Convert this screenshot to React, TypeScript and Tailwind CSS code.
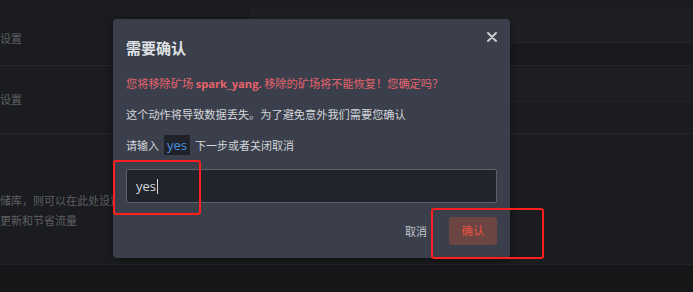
import React from "react";

const FONT = { fontFamily: '"Open Sans", "Noto Sans CJK SC", sans-serif' };
const CJK = { fontFamily: '"Noto Sans CJK SC", "Open Sans", sans-serif' };

export default function App() {
  return (
    <div className="relative w-[693px] h-[292px] overflow-hidden bg-[#1b1c1f]" style={CJK}>
      {/* background page */}
      <div className="flex flex-col h-full">
        <div className="h-[7px] bg-[#1a1b1e]" />
        <div className="flex h-[59px] border-b border-[#25262a]">
          <div className="w-[250px] flex items-end pb-[19px] overflow-hidden">
            <span className="ml-[-11px] text-[11px] leading-[16px] text-[#5d5f63] whitespace-nowrap">点设置</span>
          </div>
          <div className="flex-1 flex flex-col">
            <div className="h-[36px] bg-[#1e1f23] border-b border-[#222327]" />
            <div className="flex-1 bg-[#191a1d]" />
          </div>
        </div>
        <div className="flex h-[68px] border-b border-[#25262a]">
          <div className="w-[250px] flex items-end pb-[26px] overflow-hidden">
            <span className="ml-[-11px] text-[11px] leading-[16px] text-[#5d5f63] whitespace-nowrap">点设置</span>
          </div>
          <div className="flex-1 flex flex-col">
            <div className="h-[36px] bg-[#1d1e22] border-b border-[#222327]" />
            <div className="flex-1 bg-[#1b1c1f]" />
          </div>
        </div>
        <div className="h-[131px] border-b border-[#222327] overflow-hidden">
          <div className="mt-[58px] flex flex-col gap-[4px] text-[11px] leading-[16px] text-[#5d5f63] whitespace-nowrap">
            <span className="ml-[-11px]">存储库，则可以在此处设置</span>
            <span className="ml-[-11px]">以更新和节省流量</span>
          </div>
        </div>
        <div className="flex-1 bg-[#161719]" />
      </div>

      {/* modal */}
      <div className="absolute left-[113px] top-[19px] w-[397px] h-[239px] rounded-[4px] bg-[#3a3f4b] shadow-[0_2px_8px_rgba(0,0,0,0.4)] px-[13px] pt-[19px] flex flex-col">
        <button className="absolute right-[13px] top-[13px] w-[10px] h-[10px]">
          <svg width="10" height="10" viewBox="0 0 10 10">
            <path d="M1 1 L9 9 M9 1 L1 9" stroke="#c9ccd1" strokeWidth="2" strokeLinecap="round" />
          </svg>
        </button>
        <div className="h-[20px] leading-[20px] text-[15px] font-bold text-[#dfe1e5]">需要确认</div>
        <div className="mt-[17px] h-[16px] leading-[16px] text-[11.2px] text-[#e7636b] whitespace-nowrap" style={FONT}>
          <span style={CJK}>您将移除矿场 </span>
          <span className="font-bold">spark_yang.</span>
          <span style={CJK}> 移除的矿场将不能恢复！您确定吗？</span>
        </div>
        <div className="mt-[15px] h-[16px] leading-[16px] text-[11.2px] text-[#d3d6da]">这个动作将导致数据丢失。为了避免意外我们需要您确认</div>
        <div className="mt-[13px] h-[20px] flex items-center text-[11px] text-[#d3d6da] whitespace-nowrap">
          <span>请输入</span>
          <span className="ml-[5px] mr-[5px] h-[20px] px-[3px] bg-[#1f2229] text-[#4a90e2] text-[13px] leading-[20px]" style={FONT}>yes</span>
          <span>下一步或者关闭取消</span>
        </div>
        <div className="mt-[14px] h-[34px] rounded-[2px] border border-[#5c616c] bg-[#21242a] flex items-center pl-[9px]">
          <span className="text-[13px] text-[#d6d8dc] leading-[18px]" style={FONT}>yes</span>
          <span className="w-px h-[15px] bg-[#d6d8dc] ml-[1px]" />
        </div>
        <div className="mt-[14px] h-[28px] flex items-center justify-end gap-[22px]">
          <span className="text-[11px] text-[#c3c6cb]">取消</span>
          <span className="w-[48px] h-[28px] rounded-[3px] bg-[#6b4542] flex items-center justify-center text-[11.5px] text-[#ea5046]">确认</span>
        </div>
      </div>

      {/* annotations */}
      <div className="absolute left-[113px] top-[160px] w-[88px] h-[55px] border-2 border-[#ff1f1f] rounded-[3px]" />
      <div className="absolute left-[431px] top-[208px] w-[113px] h-[51px] border-2 border-[#ff1f1f] rounded-[3px]" />
    </div>
  );
}
